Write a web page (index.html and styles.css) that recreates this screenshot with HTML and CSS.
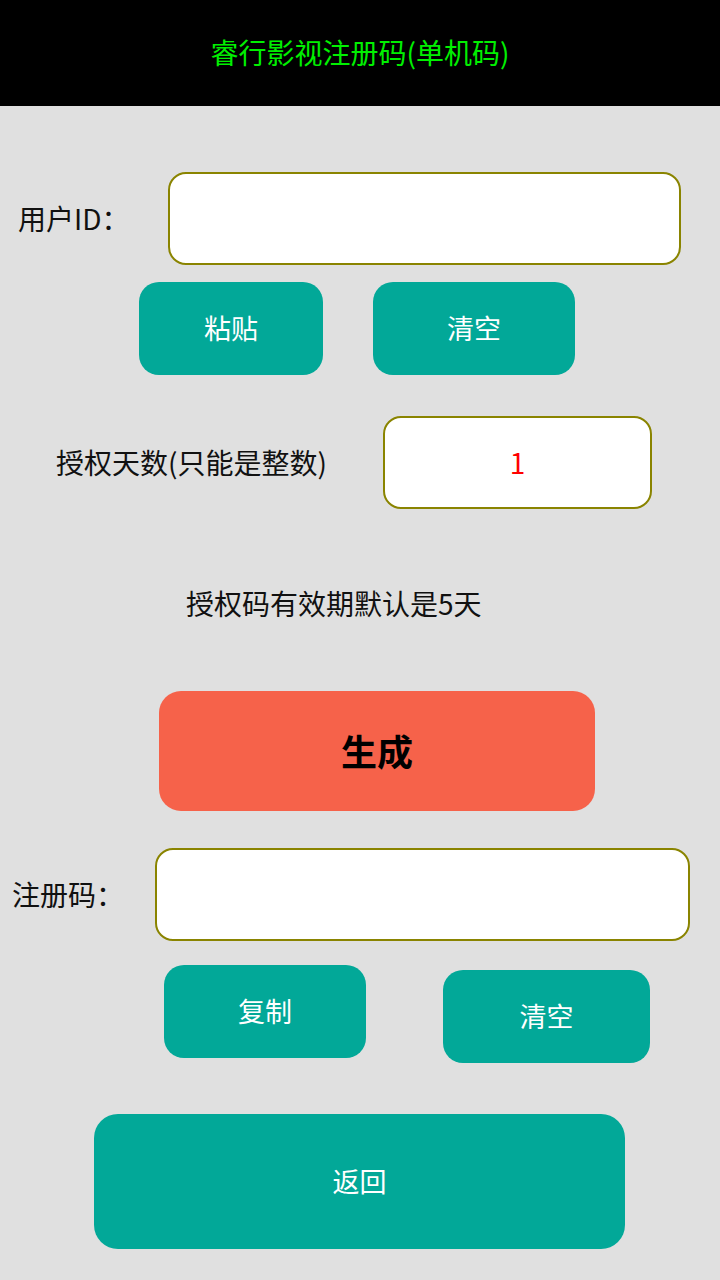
FILE: index.html
```html
<!DOCTYPE html>
<html lang="zh-CN">
<head>
<meta charset="utf-8">
<title>睿行影视注册码(单机码)</title>
<link rel="stylesheet" href="styles.css">
</head>
<body>
<header class="header">睿行影视注册码(单机码)</header>
<main class="main">
  <div class="row row-id">
    <span class="label label-id">用户ID：</span>
    <div class="input input-id"></div>
  </div>
  <div class="btn-row btn-row-1">
    <div class="btn btn-paste">粘贴</div>
    <div class="btn btn-clear1">清空</div>
  </div>
  <div class="row row-days">
    <span class="label label-days">授权天数(只能是整数)</span>
    <div class="input input-days">1</div>
  </div>
  <p class="note">授权码有效期默认是5天</p>
  <div class="btn btn-gen">生成</div>
  <div class="row row-code">
    <span class="label label-code">注册码：</span>
    <div class="input input-code"></div>
  </div>
  <div class="btn-row btn-row-2">
    <div class="btn btn-copy">复制</div>
    <div class="btn btn-clear2">清空</div>
  </div>
  <div class="btn btn-back">返回</div>
</main>
</body>
</html>
```
FILE: styles.css
```css
html, body {
  margin: 0;
  padding: 0;
}
body {
  width: 720px;
  height: 1280px;
  background: #e0e0e0;
  font-family: "Noto Sans CJK SC", "Noto Sans", sans-serif;
  color: #111;
  overflow: hidden;
}
.header {
  height: 106px;
  background: #000;
  color: #00f000;
  font-size: 28px;
  display: flex;
  align-items: center;
  justify-content: center;
  line-height: 1.2;
}
.main {
  display: flex;
  flex-direction: column;
  align-items: flex-start;
}
.row {
  display: flex;
  align-items: center;
}
.label {
  font-size: 28px;
  line-height: 1.2;
}
.input {
  box-sizing: border-box;
  height: 93px;
  background: #fff;
  border: 2px solid #8a8400;
  border-radius: 18px;
}
.row-id {
  margin-top: 66px;
  padding-left: 18px;
}
.label-id {
  width: 150px;
}
.input-id {
  width: 513px;
}
.btn {
  box-sizing: border-box;
  display: flex;
  align-items: center;
  justify-content: center;
  background: #02a898;
  color: #fff;
  border-radius: 20px;
  font-size: 27px;
  line-height: 1.2;
  height: 93px;
}
.btn-row {
  display: flex;
  align-items: flex-start;
}
.btn-row-1 {
  margin-top: 17px;
  padding-left: 139px;
  gap: 50px;
}
.btn-paste { width: 184px; }
.btn-clear1 { width: 202px; }
.row-days {
  margin-top: 41px;
  padding-left: 56px;
}
.label-days {
  width: 327px;
}
.input-days {
  width: 269px;
  display: flex;
  align-items: center;
  justify-content: center;
  color: #ff0000;
  font-size: 28px;
  line-height: 1.2;
}
.note {
  margin: 74px 0 0;
  padding-left: 186px;
  font-size: 28px;
  line-height: 40px;
  height: 40px;
}
.btn-gen {
  margin-top: 68px;
  margin-left: 159px;
  width: 436px;
  height: 120px;
  background: #f6624a;
  color: #000;
  font-size: 36px;
  font-weight: bold;
  border-radius: 22px;
}
.row-code {
  margin-top: 37px;
  padding-left: 12px;
}
.label-code {
  width: 143px;
}
.input-code {
  width: 535px;
}
.btn-row-2 {
  margin-top: 24px;
  padding-left: 164px;
  gap: 77px;
}
.btn-copy { width: 202px; }
.btn-clear2 {
  width: 207px;
  margin-top: 5px;
}
.btn-back {
  margin-top: 51px;
  margin-left: 94px;
  width: 531px;
  height: 135px;
  border-radius: 24px;
}
```
